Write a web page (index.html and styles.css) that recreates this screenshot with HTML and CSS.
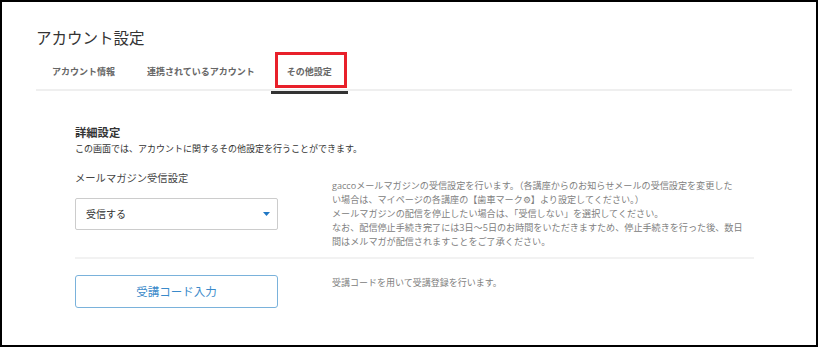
FILE: index.html
```html
<!DOCTYPE html>
<html lang="ja">
<head>
<meta charset="utf-8">
<title>アカウント設定</title>
<link rel="stylesheet" href="styles.css">
</head>
<body>
<div class="frame">
  <header class="header">
    <h1 class="title">アカウント設定</h1>
    <nav class="tabs">
      <span class="tab">アカウント情報</span>
      <span class="tab">連携されているアカウント</span>
      <span class="tab tab-active">その他設定<span class="highlight"></span></span>
    </nav>
  </header>
  <main class="content">
    <h2 class="section-title">詳細設定</h2>
    <p class="section-desc">この画面では、アカウントに関するその他設定を行うことができます。</p>

    <div class="row row-mail">
      <div class="left">
        <div class="label">メールマガジン受信設定</div>
        <div class="select">
          <span class="select-text">受信する</span>
          <svg class="select-arrow" width="7" height="4" viewBox="0 0 7 4"><polygon points="0,0 7,0 3.5,4" fill="#1f77c4"/></svg>
        </div>
      </div>
      <p class="note note-mail">gaccoメールマガジンの受信設定を行います。（各講座からのお知らせメールの受信設定を変更した<br>い場合は、マイページの各講座の【歯車マーク⚙】より設定してください。）<br>メールマガジンの配信を停止したい場合は、「受信しない」を選択してください。<br>なお、配信停止手続き完了には3日～5日のお時間をいただきますため、停止手続きを行った後、数日<br>間はメルマガが配信されますことをご了承ください。</p>
    </div>

    <div class="divider"></div>

    <div class="row row-code">
      <div class="left">
        <div class="button">受講コード入力</div>
      </div>
      <p class="note note-code">受講コードを用いて受講登録を行います。</p>
    </div>
  </main>
</div>
</body>
</html>
```

FILE: styles.css
```css
* {
  box-sizing: border-box;
}

html, body {
  margin: 0;
  padding: 0;
  background: #ffffff;
}

body {
  font-family: "Open Sans", "Noto Sans CJK JP", sans-serif;
  color: #333333;
}

.frame {
  width: 818px;
  height: 347px;
  border: 2px solid #000000;
  padding: 26px 24px 0 34px;
  overflow: hidden;
}

.title {
  margin: 0;
  font-size: 15.5px;
  line-height: 20px;
  font-weight: normal;
  color: #333333;
}

.tabs {
  margin-top: 4px;
  display: flex;
  border-bottom: 2px solid #efefef;
}

.tab {
  position: relative;
  padding: 14px 16px 12px;
  font-size: 9px;
  line-height: 11px;
  font-weight: bold;
  color: #666666;
  white-space: nowrap;
}

.tab-active::after {
  content: "";
  position: absolute;
  left: 0;
  right: 0;
  bottom: -5px;
  height: 3px;
  background: #333333;
}

.highlight {
  position: absolute;
  top: 0;
  left: 4px;
  right: 1px;
  bottom: 1px;
  border: 3px solid #e8202a;
}

.content {
  margin: 0 38px 0 39px;
  padding-top: 34px;
}

.section-title {
  margin: 0;
  font-size: 11.3px;
  line-height: 16px;
  font-weight: bold;
  color: #333333;
}

.section-desc {
  margin: 1px 0 0;
  font-size: 9px;
  line-height: 14px;
  color: #333333;
}

.row {
  display: grid;
  grid-template-columns: 203px 1fr;
  column-gap: 54px;
  align-items: start;
}

.row-mail {
  margin-top: 15px;
}

.label {
  font-size: 10.3px;
  line-height: 14px;
  color: #444444;
}

.select {
  margin-top: 13px;
  height: 32px;
  border: 1px solid #cccccc;
  border-radius: 2px;
  padding: 0 7px 0 10px;
  display: flex;
  align-items: center;
  justify-content: space-between;
}

.select-text {
  font-size: 10px;
  line-height: 14px;
  color: #333333;
}

.select-arrow {
  display: block;
}

.note {
  margin: 0;
  font-size: 9.1px;
  line-height: 14px;
  color: #808080;
  white-space: nowrap;
}

.note-mail {
  padding-top: 8px;
}

.divider {
  margin-top: 8px;
  height: 2px;
  background: #f2f2f2;
}

.row-code {
  margin-top: 16px;
}

.button {
  height: 33px;
  border: 1px solid #7ab2db;
  border-radius: 3px;
  display: flex;
  align-items: center;
  justify-content: center;
  font-size: 11.5px;
  line-height: 14px;
  color: #3a8aca;
}

.note-code {
  padding-top: 1px;
  font-size: 9px;
}
```
